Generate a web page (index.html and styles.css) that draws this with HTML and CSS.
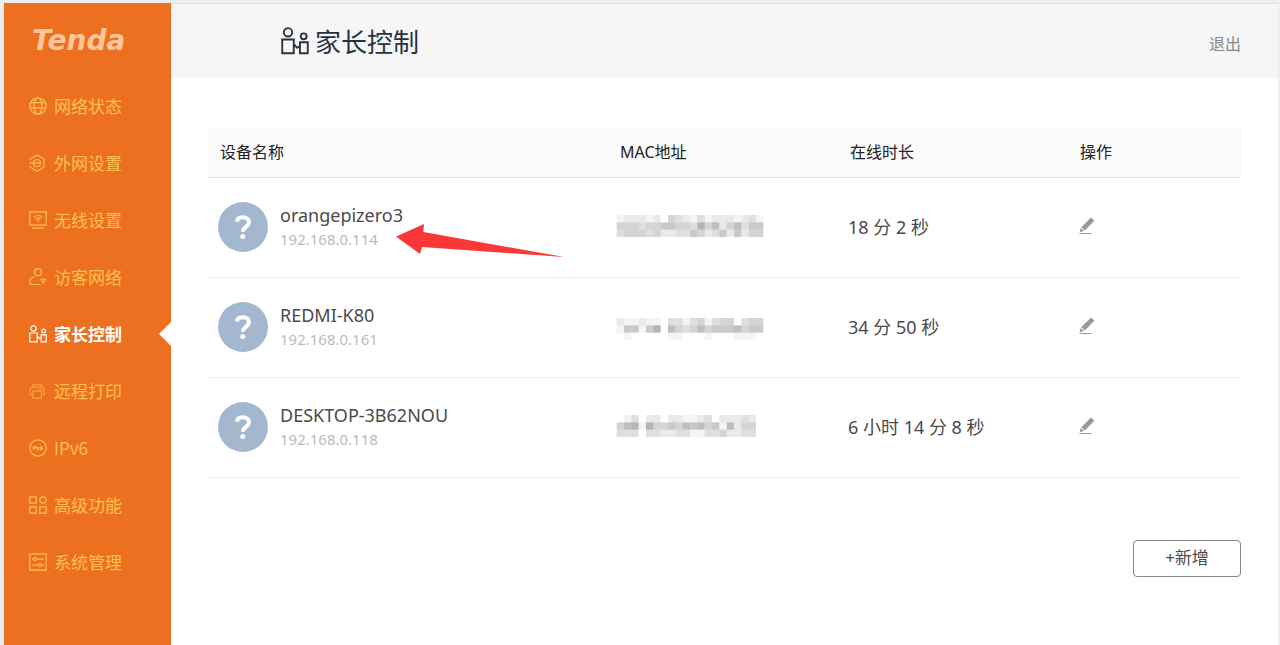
FILE: index.html
```html
<!DOCTYPE html>
<html lang="zh-CN">
<head>
    <meta charset="UTF-8">
    <meta name="viewport" content="width=device-width, initial-scale=1.0">
    <title>Tenda - 家长控制</title>
    <link rel="stylesheet" href="styles.css">
</head>
<body>

<!-- 图标 -->
<svg class="sprite" aria-hidden="true">
    <symbol id="icon-family" viewBox="0 0 18 18">
        <circle cx="4.5" cy="3.4" r="2.7"/>
        <circle cx="14.6" cy="6" r="1.900"/>
        <path d="M.8 8h7.400v8.900H.8zM12.200 9.800h5v7.100h-5zM8.200 11l2.200 2.400 1.800-1.200"/>
    </symbol>
    <symbol id="icon-edit" viewBox="0 0 18 18">
        <path class="solid" d="M13 .5l3.400 3.200-9.600 9.800-3.600-3.300zM2.600 11l3.400 3.100-4.300 1.200z"/>
        <path d="M1.500 16.500h12"/>
    </symbol>
    <symbol id="icon-device" viewBox="0 0 50 50">
        <circle class="disc" cx="25" cy="25" r="25"/>
        <path class="mark" d="M19 19.600c.2-3 2.700-4.300 5.800-4.300 3.600 0 6.200 1.800 6.200 4.900 0 4.500-6.100 4.300-6.100 9.600"/>
        <circle class="dot" cx="24.800" cy="34.600" r="2.500"/>
    </symbol>
</svg>

<div class="app">
    <aside class="sidebar">
        <a class="logo" href="#">Tenda</a>
        <nav class="menu">
            <a href="#">
                <svg class="icon" viewBox="0 0 18 18"><circle cx="9" cy="9" r="8.200"/><ellipse cx="9" cy="9" rx="4" ry="8.200"/><path d="M1.800 5.600h14.400M1 10.800h16"/></svg>
                网络状态
            </a>
            <a href="#">
                <svg class="icon" viewBox="0 0 18 18"><path d="M1 6V5.200L8 1l7 4v8.200L8 17.200 1 13v-1M0 9h4.500"/><circle cx="8" cy="9" r="3.500"/><path d="M4.500 9h7"/></svg>
                外网设置
            </a>
            <a href="#">
                <svg class="icon" viewBox="0 0 18 18"><path d="M.8.8h16.400v13.400H.8zM3 17.200h12M5 6q4-3 8 0M6.500 8q2.500-1.800 5 0"/><circle class="solid" cx="9" cy="9.600" r="1"/></svg>
                无线设置
            </a>
            <a href="#">
                <svg class="icon" viewBox="0 0 18 18"><circle cx="9" cy="4.200" r="3.500"/><path d="M5.500 8.600C2.500 9.500.8 11.500.8 14c0 1.600.8 2.500 2.200 2.500h8.500M11 12.200q3.200-2.800 6.400 0M12.500 14q1.700-1.500 3.400 0"/><circle class="solid" cx="14.200" cy="15.400" r=".8"/></svg>
                访客网络
            </a>
            <a class="active" href="#">
                <svg class="icon"><use href="#icon-family"/></svg>
                家长控制
            </a>
            <a href="#">
                <svg class="icon faint" viewBox="0 0 18 18"><path d="M4 5.200V2.800h8.500v2.400M3.500 13H1.200V7.200q0-2 2-2h9.800q2 0 2 2V13h-2M4 9.200h8.500v7H4zM10 7.300h2.500"/></svg>
                远程打印
            </a>
            <a href="#">
                <svg class="icon" viewBox="0 0 18 18"><circle cx="9" cy="9" r="8.200"/><path d="M4 7.500v3M5.600 10.500v-3h1.200q1 .8 0 1.500H5.600M8 8l.9 2.500L9.800 8M13.500 7.500q-2.300 0-2.300 1.800 0 1.300 1.200 1.300 1.200 0 1.200-.9 0-1-2.300-.6"/></svg>
                IPv6
            </a>
            <a href="#">
                <svg class="icon" viewBox="0 0 18 18"><path d="M.8.8h6.400v6.400H.8zM.8 10.800h6.400v6.400H.8zM10.800 10.800h6.400v6.400h-6.400z"/><circle cx="14" cy="4" r="3.200"/></svg>
                高级功能
            </a>
            <a href="#">
                <svg class="icon" viewBox="0 0 18 18"><path d="M.8.8h16.400v16.400H.8zM3 6.200h1.500M7.500 6.200H15M3 12h6M12.500 12H15"/><circle cx="6" cy="6.200" r="1.500"/><circle cx="11" cy="12" r="1.500"/></svg>
                系统管理
            </a>
        </nav>
    </aside>

    <main class="main">
        <header class="topbar">
            <h1><svg class="icon"><use href="#icon-family"/></svg>家长控制</h1>
            <a class="logout" href="#">退出</a>
        </header>

        <div class="content">
            <table class="devices">
                <thead>
                    <tr>
                        <th>设备名称</th>
                        <th class="col-mac">MAC地址</th>
                        <th class="col-time">在线时长</th>
                        <th class="col-edit">操作</th>
                    </tr>
                </thead>
                <tbody>
                    <tr>
                        <td>
                            <div class="device">
                                <svg class="avatar"><use href="#icon-device"/></svg>
                                <div>
                                    <div class="name">orangepizero3</div>
                                    <div class="ip">192.168.0.114</div>
                                </div>
                                <svg class="pointer" viewBox="0 0 168 33" aria-hidden="true"><path d="M0 12.500L28 0l-.7 8L168 33 26 23l-2 7z"/></svg>
                            </div>
                        </td>
                        <td class="mac-cell"><svg class="mac" viewBox="0 0 20 3" data-rows="12221204321312221231 44434455443746246355 34443422335423525244"></svg></td>
                        <td>18 分 2 秒</td>
                        <td><button class="edit" aria-label="编辑"><svg><use href="#icon-edit"/></svg></button></td>
                    </tr>
                    <tr>
                        <td>
                            <div class="device">
                                <svg class="avatar"><use href="#icon-device"/></svg>
                                <div>
                                    <div class="name">REDMI-K80</div>
                                    <div class="ip">192.168.0.161</div>
                                </div>
                            </div>
                        </td>
                        <td class="mac-cell"><svg class="mac low" viewBox="0 0 20 3" data-rows="21121103313413440344 15515706434645556455 01000001100010001110"></svg></td>
                        <td>34 分 50 秒</td>
                        <td><button class="edit" aria-label="编辑"><svg><use href="#icon-edit"/></svg></button></td>
                    </tr>
                    <tr>
                        <td>
                            <div class="device">
                                <svg class="avatar"><use href="#icon-device"/></svg>
                                <div>
                                    <div class="name">DESKTOP-3B62NOU</div>
                                    <div class="ip">192.168.0.118</div>
                                </div>
                            </div>
                        </td>
                        <td class="mac-cell"><svg class="mac" viewBox="0 0 20 3" data-rows="01302202211230222320 46717445465645162440 33303322331133422330"></svg></td>
                        <td>6 小时 14 分 8 秒</td>
                        <td><button class="edit" aria-label="编辑"><svg><use href="#icon-edit"/></svg></button></td>
                    </tr>
                </tbody>
            </table>

            <div class="actions">
                <button class="add">+新增</button>
            </div>
        </div>
    </main>
</div>

<script src="script.js"></script>
</body>
</html>
```
FILE: styles.css
```css
* {
    box-sizing: border-box;
}
body {
    margin: 0;
    padding: 3px 2px 0 4px;
    background-color: #eceef1;
    font-family: "Noto Sans", "Noto Sans CJK SC", sans-serif;
    font-size: 17px;
    color: #4a4a4a;
}
a {
    color: inherit;
    text-decoration: none;
}
svg {
    fill: none;
    stroke: currentColor;
}
.sprite {
    display: none;
}
.solid {
    fill: currentColor;
    stroke: none;
}
.app {
    display: flex;
    min-height: calc(100vh - 3px);
    background-color: #fff;
}

/* 左侧菜单 */
.sidebar {
    flex: 0 0 167px;
    background-color: #ed7020;
    color: #ffc14f;
}
.logo {
    display: block;
    padding: 20px 0 0 28px;
    font: italic bold 28px/36px "DejaVu Sans", sans-serif;
    color: #ffc69c;
}
.menu {
    padding-top: 18px;
}
.menu a {
    position: relative;
    display: flex;
    align-items: center;
    gap: 7px;
    height: 57px;
    padding-left: 25px;
    font-family: "Noto Sans CJK SC", sans-serif;
}
.icon {
    width: 18px;
    height: 18px;
    stroke-width: 1.2;
}
.faint {
    opacity: 0.6;
}
.menu .active {
    color: #fff;
    font-weight: bold;
}
.menu .active::after {
    content: "";
    position: absolute;
    right: 0;
    border: 12px solid transparent;
    border-left: 0;
    border-right-color: #fff;
}

/* 右侧内容 */
.main {
    flex: 1;
    min-width: 0;
}
.topbar {
    display: flex;
    align-items: center;
    justify-content: space-between;
    height: 75px;
    padding: 0 37px 0 110px;
    border-top: 1px solid #e0e2e8;
    background-color: #f6f6f6;
}
h1 {
    display: flex;
    align-items: center;
    gap: 6px;
    margin: 0;
    font-size: 26px;
    font-weight: normal;
    color: #27333f;
}
h1 .icon {
    width: 28px;
    height: 28px;
}
.logout {
    padding-top: 4px;
    font-size: 16px;
    color: #888;
}
.content {
    padding: 49px 37px;
}
.devices {
    width: 100%;
    table-layout: fixed;
    border-collapse: collapse;
}
.devices th {
    height: 50px;
    padding: 0 12px 2px;
    background-color: #fafafa;
    border-bottom: 1px solid #e2e2e2;
    font-size: 16px;
    font-weight: normal;
    text-align: left;
    color: #222;
}
.devices td {
    height: 100px;
    padding: 0 10px 2px;
    border-bottom: 1px solid #eee;
    font-size: 18px;
}
.devices .mac-cell {
    padding-left: 8px;
}
.col-mac,
.col-time {
    width: 230px;
}
.col-edit {
    width: 173px;
}
.device {
    position: relative;
    display: flex;
    align-items: center;
    gap: 12px;
    padding-top: 2px;
}
.avatar {
    width: 50px;
    height: 50px;
}
.disc {
    fill: #a3b8ce;
    stroke: none;
}
.mark {
    stroke: #fff;
    stroke-width: 4;
}
.dot {
    fill: #fff;
    stroke: none;
}
.name {
    line-height: 24px;
}
.ip {
    font-size: 15px;
    line-height: 24px;
    color: #bbb;
}
.pointer {
    position: absolute;
    left: 178px;
    top: 24px;
    width: 168px;
    height: 33px;
    fill: #fb3838;
    stroke: none;
}
.mac {
    display: block;
    width: 148px;
    height: 22px;
    fill: #626865;
    stroke: none;
}
.low {
    margin-top: 6px;
}
.edit {
    display: block;
    padding: 0;
    border: 0;
    background: none;
    color: #999;
    cursor: pointer;
}
.edit svg {
    display: block;
    width: 18px;
    height: 18px;
}
.actions {
    display: flex;
    justify-content: flex-end;
    padding-top: 62px;
}
.add {
    width: 108px;
    height: 37px;
    padding-bottom: 4px;
    border: 1px solid #888;
    border-radius: 4px;
    background-color: #fff;
    font-family: inherit;
    font-size: 17px;
    color: #4a4a4a;
    cursor: pointer;
}
```
FILE: script.js
```javascript
// 绘制 MAC 地址的马赛克, 每个数字对应一格的深浅
document.querySelectorAll(".mac").forEach(svg => {
    svg.dataset.rows.split(" ").forEach((row, y) => {
        [...row].forEach((shade, x) => {
            const cell = document.createElementNS("http://www.w3.org/2000/svg", "rect");
            cell.setAttribute("x", x);
            cell.setAttribute("y", y);
            cell.setAttribute("width", 1);
            cell.setAttribute("height", 1);
            cell.setAttribute("fill-opacity", shade * 0.07);
            svg.appendChild(cell);
        });
    });
});
```
